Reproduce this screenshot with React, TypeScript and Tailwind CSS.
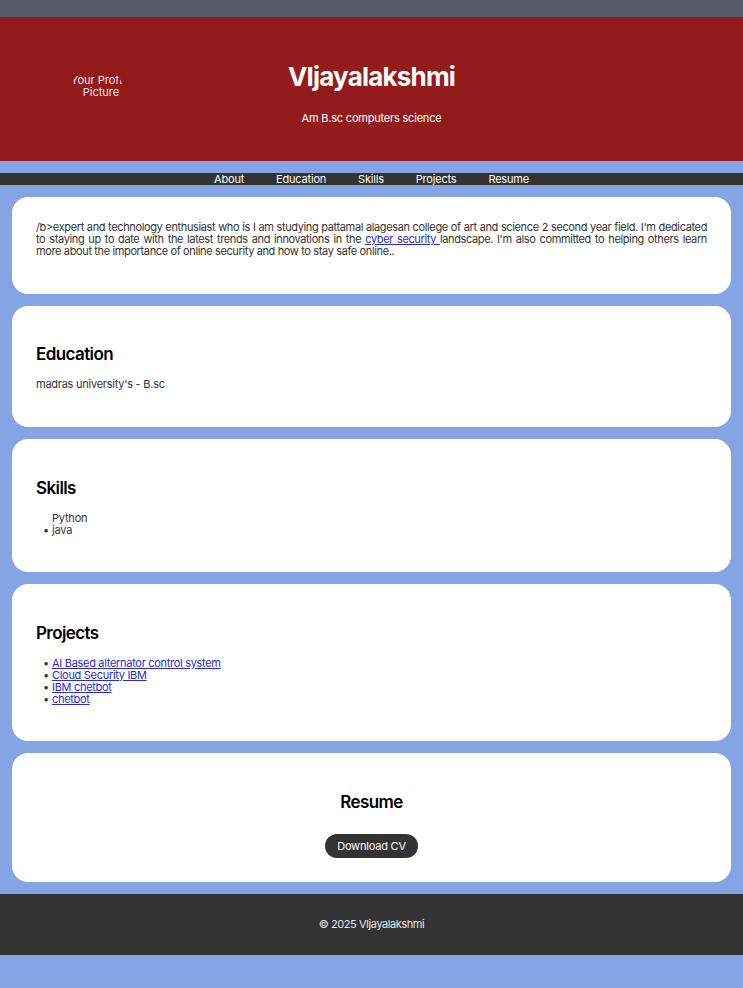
import React from 'react';

const projects = [
  'AI Based alternator control system',
  'Cloud Security IBM',
  'IBM chetbot',
  'chetbot',
];

const navLinks = ['About', 'Education', 'Skills', 'Projects', 'Resume'];

const Bullet = () => <span className="-ml-[9px] w-[9px] shrink-0 text-[#333333]">•</span>;

export default function App() {
  return (
    <div className="min-h-[988px] bg-[#84a4e4] font-['Inter','Liberation_Sans',sans-serif]">
      {/* top strip */}
      <div className="h-[17px] bg-[#545b68]" />

      {/* Header */}
      <header className="grid h-[144px] grid-cols-[1fr_auto_1fr] items-center bg-[#941b1b] text-center text-white">
        <div className="flex pl-[69px]">
          <div className="mt-[12px] flex h-[56px] w-[56px] items-start justify-center overflow-hidden rounded-full pt-[7px] text-[11px] leading-[12px] text-[#f4e4e4]">
            <span className="ml-[8px] block w-[62px] shrink-0">Your Profile Picture</span>
          </div>
        </div>
        <div className="pt-[7px]">
          <h1 className="text-[26px] leading-[34px] font-bold tracking-[-0.8px]">VIjayalakshmi</h1>
          <p className="mt-[17px] text-[11px] leading-[14px] tracking-[-0.2px]">Am B.sc computers science</p>
        </div>
        <div />
      </header>

      {/* Nav */}
      <nav className="mt-[12px] flex h-[12px] justify-center bg-[#333333] text-[11px] leading-[12px] tracking-[-0.2px] text-white">
        {navLinks.map(link => (
          <a key={link} href={`#${link.toLowerCase()}`} className="mx-[16px]">
            {link}
          </a>
        ))}
      </nav>

      <main className="flex flex-col gap-[12px] px-[12px] pt-[12px]">
        {/* About */}
        <section id="about" className="rounded-[16px] bg-white px-[24px] pt-[24px] pb-[37px]">
          <p className="text-justify text-[11px] leading-[12px] tracking-[-0.37px] text-[#333333]">
            /b&gt;expert and technology enthusiast who is I am studying pattamal alagesan college of art and science 2 second year field. I'm dedicated to staying up to date with the latest trends and innovations in the{' '}
            <a href="#" className="text-[#2a2ad6] underline">cyber security </a>
            landscape. I'm also committed to helping others learn more about the importance of online security and how to stay safe online..
          </p>
        </section>

        {/* Education */}
        <section id="education" className="rounded-[16px] bg-white px-[24px] pt-[37px] pb-[37px]">
          <h2 className="text-[17px] leading-[22px] font-semibold tracking-[-0.6px] text-black">Education</h2>
          <p className="mt-[13px] text-[11px] leading-[12px] tracking-[-0.25px] text-[#333333]">madras university's - B.sc</p>
        </section>

        {/* Skills */}
        <section id="skills" className="rounded-[16px] bg-white px-[24px] pt-[38px] pb-[36px]">
          <h2 className="text-[17px] leading-[22px] font-semibold tracking-[-0.6px] text-black">Skills</h2>
          <ul className="mt-[13px] pl-[16px] text-[11px] leading-[12px] tracking-[-0.2px] text-[#333333]">
            <li>Python</li>
            <li className="flex">
              <Bullet />
              java
            </li>
          </ul>
        </section>

        {/* Projects */}
        <section id="projects" className="rounded-[16px] bg-white px-[24px] pt-[38px] pb-[36px]">
          <h2 className="text-[17px] leading-[22px] font-semibold tracking-[-0.6px] text-black">Projects</h2>
          <ul className="mt-[13px] pl-[16px] text-[11px] leading-[12px] tracking-[-0.3px]">
            {projects.map(p => (
              <li key={p} className="flex">
                <Bullet />
                <a href="#" className="text-[#2a2ad6] underline">{p}</a>
              </li>
            ))}
          </ul>
        </section>

        {/* Resume */}
        <section id="resume" className="flex flex-col items-center rounded-[16px] bg-white px-[24px] pt-[38px] pb-[24px]">
          <h2 className="text-[17px] leading-[22px] font-semibold tracking-[-0.6px] text-black">Resume</h2>
          <button className="mt-[21px] h-[24px] rounded-full bg-[#333333] px-[12px] text-[11px] tracking-[-0.2px] text-white">
            Download CV
          </button>
        </section>
      </main>

      {/* Footer */}
      <footer className="mt-[12px] flex h-[61px] items-center justify-center bg-[#333333] text-[11px] tracking-[-0.45px] text-[#e6e6e6]">
        © 2025 VIjayalakshmi
      </footer>
    </div>
  );
}
